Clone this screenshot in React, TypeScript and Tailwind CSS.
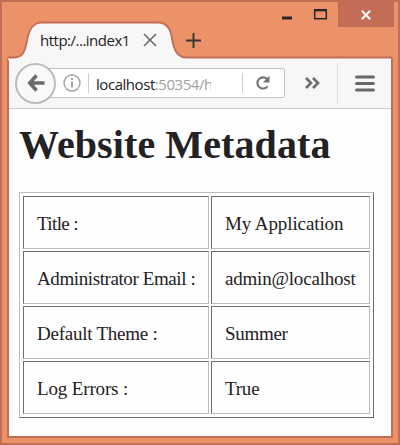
const rows = [
  { label: "Title :", value: "My Application", lt: "tracking-[-0.6px]", vt: "tracking-[-0.1px]" },
  { label: "Administrator Email :", value: "admin@localhost", lt: "tracking-[-0.4px]", vt: "tracking-[-0.2px]" },
  { label: "Default Theme :", value: "Summer", lt: "tracking-[-0.25px]", vt: "tracking-[-0.3px]" },
  { label: "Log Errors :", value: "True", lt: "tracking-[-0.15px]", vt: "tracking-[-0.2px]" },
];

const cell = "flex items-center border border-t-[#6d6d6f] border-l-[#6d6d6f] border-r-[#bdbdbd] border-b-[#bdbdbd] pt-[3px] pl-[13px] whitespace-pre";

function TitleBar() {
  return (
    <header className="relative flex h-[56px] shrink-0">
      <svg className="absolute left-0 top-0" width="396" height="58" viewBox="2 2 396 58" fill="none">
        <path d="M8 57.5H14C23 57.5 25 51 27 41C29 29 33 22.5 42 22.5H158C168 22.5 171 30 172 39C174 50 177 57.5 187 57.5V60H8Z" fill="#f8f7f7" />
        <path d="M8 57.5H14C23 57.5 25 51 27 41C29 29 33 22.5 42 22.5H158C168 22.5 171 30 172 39C174 50 177 57.5 187 57.5H392" stroke="#c26e56" strokeWidth="1.8" />
      </svg>
      <div className="relative mt-[20px] ml-[38px] flex h-[36px] w-[117px] items-center justify-between">
        <span className="w-[92px] whitespace-nowrap text-[15px] leading-5 tracking-[-0.5px] text-[#242124]">http:/...index1</span>
        <svg width="14" height="14" viewBox="0 0 14 14" stroke="#666" strokeWidth="1.5"><path d="M1 1L13 13M13 1L1 13" /></svg>
      </div>
      <svg className="relative mt-[31px] ml-[29px]" width="15" height="15" viewBox="0 0 16 16" stroke="#343536" strokeWidth="2"><path d="M0 8H16M8 0V16" /></svg>
      <div className="relative ml-auto mr-[4px] flex">
        <svg width="60" height="25" viewBox="0 0 60 25" fill="none" stroke="#2a2628">
          <path d="M4 16H14" strokeWidth="3" />
          <rect x="36.7" y="7.7" width="11.6" height="9" strokeWidth="1.5" />
          <path d="M36 8.2H49" strokeWidth="2.4" />
        </svg>
        <div className="flex h-[25px] w-[56px] items-center justify-center bg-[#c26e56]">
          <svg width="10" height="10" viewBox="0 0 10 10" stroke="#fff" strokeWidth="2"><path d="M.8 .8L9.2 9.2M9.2 .8L.8 9.2" /></svg>
        </div>
      </div>
    </header>
  );
}

function Toolbar() {
  return (
    <nav className="flex h-[51px] shrink-0 items-center border-b border-[#cfcccb] bg-[#f8f7f7]">
      <div className="z-10 ml-[6px] flex h-[41px] w-[41px] items-center justify-center rounded-full border-2 border-[#bcbcbc] bg-[#faf9f9]">
        <svg width="18" height="18" viewBox="0 0 18 18" fill="none" stroke="#6b6b6d" strokeWidth="3.6"><path d="M9.5 1.5L2.8 9L9.5 16.5M3 9H17.5" /></svg>
      </div>
      <div className="-ml-[8px] flex h-[30px] w-[237px] items-center rounded-r-[2px] border border-[#c4c3c3] bg-white pl-[14px]">
        <svg width="18" height="18" viewBox="0 0 18 18" fill="none" stroke="#a3a3a3" strokeWidth="1.4"><circle cx="9" cy="9" r="8" /><path d="M9 7.5V13.5M9 4V6" strokeWidth="2" /></svg>
        <div className="ml-[7px] h-[20px] w-px bg-[#d0cdcc]" />
        <div className="mt-px ml-[7px] w-[115px] overflow-hidden whitespace-nowrap text-[15px] leading-5 tracking-[-0.45px] text-[#a1a1a1]">
          <span className="text-[#242124]">localhost</span>:50354/h
        </div>
        <div className="ml-[31px] h-[20px] w-px bg-[#d0cdcc]" />
        <svg className="ml-[12px]" width="16" height="16" viewBox="0 0 16 16" fill="none" stroke="#737375" strokeWidth="2.1"><path d="M12 4A5.6 5.6 0 1 0 12.5 11.3" /><path d="M14.5 .5V7.5H8Z" fill="#737375" stroke="none" /></svg>
      </div>
      <svg className="ml-[20px]" width="15" height="12" viewBox="0 0 15 12" fill="none" stroke="#6e6e70" strokeWidth="2.7"><path d="M1 1L6 6L1 11M8 1L13 6L8 11" /></svg>
      <div className="ml-[17px] h-[40px] w-px bg-[#dedbda]" />
      <svg className="ml-[17px]" width="20" height="17" viewBox="0 0 20 17" stroke="#69696b" strokeWidth="3.2" strokeLinecap="round"><path d="M1.6 2H18.4M1.6 8.5H18.4M1.6 15H18.4" /></svg>
    </nav>
  );
}

export default function App() {
  return (
    <div className="flex h-[445px] w-[400px] flex-col overflow-hidden border-2 border-[#c26e56] bg-[#eb9268] font-['Open_Sans',sans-serif]">
      <TitleBar />
      <div className="mx-[5px] mb-[5px] flex min-h-0 flex-1 flex-col border-2 border-t-0 border-[#c26e56] bg-[#fefefe]">
        <Toolbar />
        <main className="pl-[10px] font-['Liberation_Serif',serif] text-[#242124]">
          <h1 className="mt-[13px] h-[46px] whitespace-nowrap text-[40px] leading-[46px] tracking-[0.1px] font-bold">Website Metadata</h1>
          <div className="mt-[24px] grid h-[226px] w-[355px] grid-cols-[186px_159px] grid-rows-4 gap-[2px] border border-t-[#bdbdbd] border-l-[#bdbdbd] border-r-[#6d6d6f] border-b-[#6d6d6f] p-[3px] text-[19px]">
            {rows.map((r) => (
              <div key={r.label} className="contents">
                <div className={cell}><span className={r.lt}>{r.label}</span></div>
                <div className={cell}><span className={r.vt}>{r.value}</span></div>
              </div>
            ))}
          </div>
        </main>
      </div>
    </div>
  );
}
